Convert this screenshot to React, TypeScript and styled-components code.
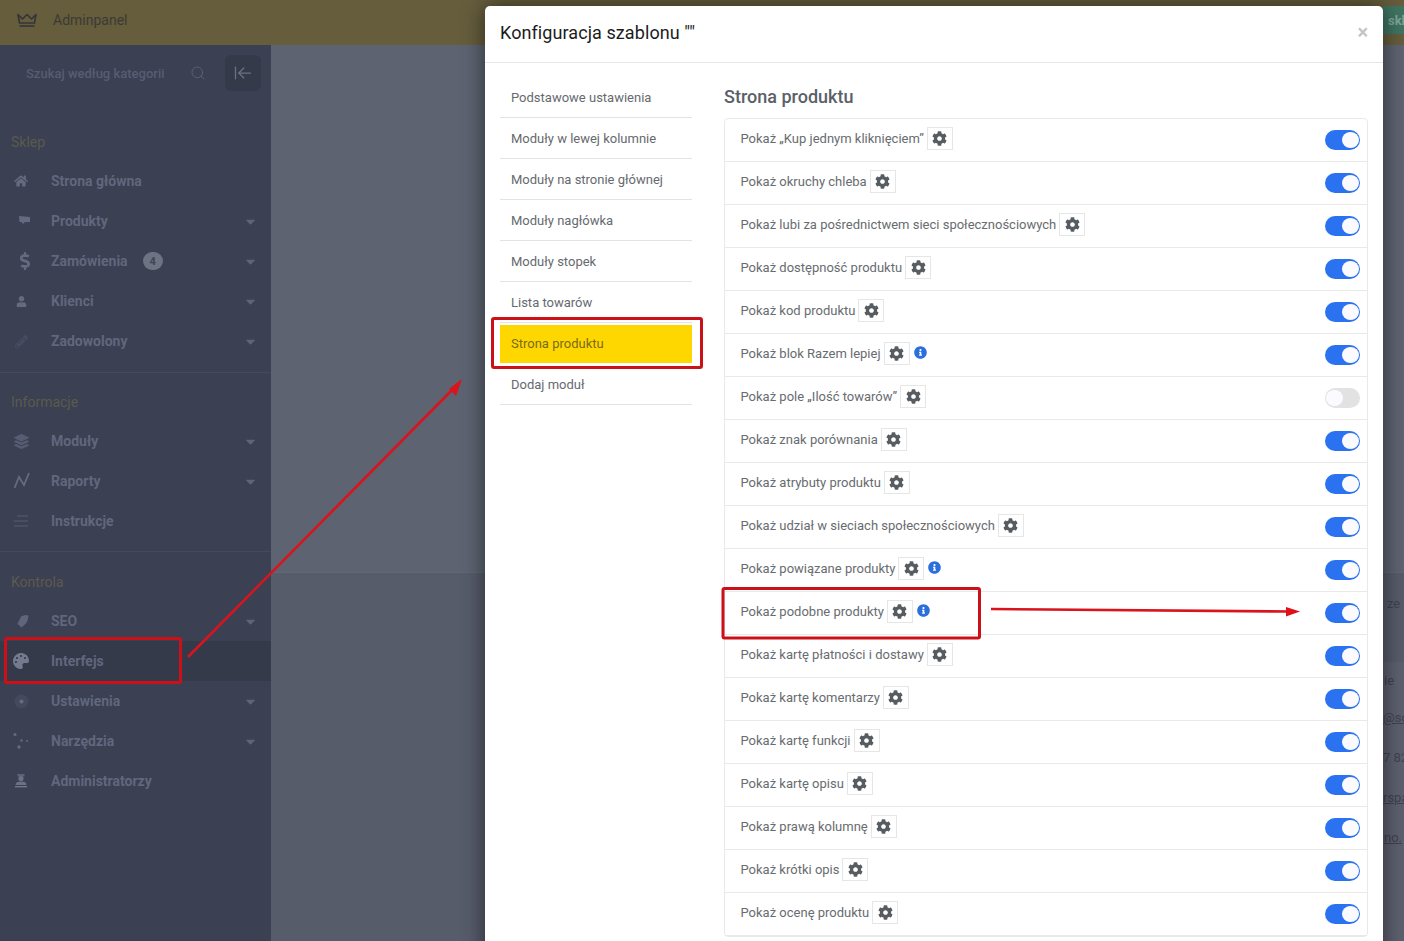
import React from "react";
import styled, { createGlobalStyle } from "styled-components";
import { FaCog, FaInfoCircle, FaHome, FaDollarSign, FaUser, FaLayerGroup, FaPalette, FaCaretDown, FaPencilAlt } from "react-icons/fa";
import { Search, ArrowLeftToLine } from "lucide-react";

const Global = createGlobalStyle`
  html, body { margin: 0; padding: 0; background: #5d6371; }
  * { box-sizing: border-box; }
  body { font-family: Roboto, "Liberation Sans", sans-serif; }
`;

const Page = styled.div`
  position: relative;
  width: 1404px;
  height: 941px;
  overflow: hidden;
  display: flex;
  flex-direction: column;
`;

const TopBar = styled.header`
  height: 45px;
  flex: none;
  background: #655d3c;
  display: flex;
  align-items: center;
  padding: 0 0 5px 17px;
  gap: 16px;
  color: #3c3a36;
  font-size: 14px;
`;

const Body = styled.div`
  flex: 1;
  display: flex;
  min-height: 0;
`;

const Sidebar = styled.aside`
  width: 271px;
  flex: none;
  background: #3b4053;
  display: flex;
  flex-direction: column;
`;

const SearchRow = styled.div`
  display: flex;
  align-items: center;
  padding: 10px 10px 0 12px;
  height: 46px;
`;

const SearchBox = styled.div`
  width: 201px;
  height: 36px;
  margin-right: 12px;
  padding: 0 7px 0 14px;
  display: flex;
  align-items: center;
  justify-content: space-between;
  color: #575d72;
  font-size: 13px;
  font-weight: 500;
`;

const Collapse = styled.div`
  width: 36px;
  height: 36px;
  border-radius: 6px;
  background: #353a4b;
  color: #6b7186;
  display: flex;
  align-items: center;
  justify-content: center;
`;

const Section = styled.section<{ $pt: number; $pb: number; $divider?: boolean }>`
  padding: ${(p) => p.$pt}px 0 ${(p) => p.$pb}px;
  border-bottom: ${(p) => (p.$divider ? "1px solid #444a5d" : "none")};
`;

const SectionTitle = styled.div`
  height: 39px;
  padding-left: 11px;
  display: flex;
  align-items: center;
  color: #5c5a4c;
  font-size: 14px;
`;

const Item = styled.div<{ $active?: boolean }>`
  height: 40px;
  display: flex;
  align-items: center;
  padding: 0 13px 0 14px;
  background: ${(p) => (p.$active ? "#353a4b" : "transparent")};
  color: #61677c;
  font-size: 14px;
  font-weight: 700;
`;

const ItemIcon = styled.span`
  width: 37px;
  flex: none;
  display: flex;
  align-items: center;
  color: #646a7f;
`;

const Shifted = styled.span<{ $x: number; $tone?: string }>`
  display: flex;
  margin-left: ${(p) => p.$x}px;
  color: ${(p) => p.$tone ?? "inherit"};
`;

const Badge = styled.span`
  width: 20px;
  height: 18px;
  border-radius: 9px;
  margin-left: 15px;
  background: #6e7384;
  color: #3f4456;
  font-size: 11px;
  display: flex;
  align-items: center;
  justify-content: center;
`;

const Caret = styled.span`
  margin-left: auto;
  color: #5d6378;
  display: flex;
  font-size: 15px;
`;

const Main = styled.main`
  flex: 1;
  display: flex;
  flex-direction: column;
  background: #5d6371;
`;

const MainTop = styled.div`
  height: 527px;
  flex: none;
`;

const MainBand = styled.div`
  flex: 1;
  background: #575c6b;
  border-top: 1px solid #626775;
`;

const StripPanel = styled.div`
  position: absolute;
  left: 1383px;
  top: 662px;
  width: 21px;
  bottom: 0;
  background: #5d616f;
`;

const StripLine = styled.div<{ $top: number; $left: number; $underline?: boolean }>`
  position: absolute;
  left: ${(p) => p.$left}px;
  right: 0;
  top: ${(p) => p.$top}px;
  white-space: nowrap;
  overflow: hidden;
  color: #3f4350;
  font-size: 13px;
  text-decoration: ${(p) => (p.$underline ? "underline" : "none")};
`;

const GreenTag = styled.div`
  position: absolute;
  left: 1383px;
  top: 6px;
  width: 21px;
  height: 28px;
  background: #3f7461;
  color: #7fa59a;
  font-size: 13px;
  font-weight: 700;
  display: flex;
  align-items: center;
  padding-left: 5px;
  overflow: hidden;
`;

const Modal = styled.div`
  position: absolute;
  left: 485px;
  top: 6px;
  width: 898px;
  height: 960px;
  background: #fff;
  border-radius: 5px;
  box-shadow: 0 0 22px rgba(0, 0, 0, 0.55);
`;

const ModalHead = styled.div`
  height: 57px;
  border-bottom: 1px solid #e6e6e6;
  padding: 0 15px;
  display: flex;
  align-items: center;
  justify-content: space-between;
  color: #1c1c1c;
  font-size: 18px;
`;

const Title = styled.span`
  margin-top: -4px;
  letter-spacing: 0.08px;
`;

const Close = styled.span`
  color: #c4c4c4;
  font-size: 20px;
  font-weight: 700;
  margin-top: -4px;
`;

const ModalBody = styled.div`
  display: flex;
  padding: 14px 15px 0;
`;

const Nav = styled.nav`
  width: 192px;
  flex: none;
  margin-right: 32px;
`;

const NavItem = styled.div<{ $active?: boolean }>`
  height: 41px;
  padding: 0 11px ${(p) => (p.$active ? "1px" : "0")};
  display: flex;
  align-items: center;
  font-size: 13px;
  color: ${(p) => (p.$active ? "#7a6a1a" : "#666a6e")};
  border-top: ${(p) => (p.$active ? "2px solid #fff" : "0")};
  border-bottom: 1px solid ${(p) => (p.$active ? "#fff" : "#e3e3e3")};
  background: ${(p) => (p.$active ? "#ffd700" : "transparent")};
  background-clip: padding-box;
`;

const Content = styled.div`
  flex: 1;
  min-width: 0;
`;

const Heading = styled.h2`
  margin: 0;
  height: 41px;
  display: flex;
  align-items: center;
  padding: 0 0 2px 0;
  font-size: 18px;
  font-weight: 500;
  color: #5a6068;
`;

const List = styled.div`
  border: 1px solid #e9e9e9;
  border-radius: 4px;
`;

const Row = styled.div`
  height: 43px;
  padding: 0 7px 0 15.5px;
  display: flex;
  align-items: center;
  border-bottom: 1px solid #e9e9e9;
  color: #686c70;
  font-size: 13px;
`;

const RowLabel = styled.span`
  margin-top: -4px;
`;

const GearButton = styled.span`
  width: 26px;
  height: 23px;
  margin-left: 3px;
  margin-top: -3px;
  border: 1px solid #e6e6e6;
  display: flex;
  align-items: center;
  justify-content: center;
  color: #565c60;
  font-size: 15px;
`;

const Info = styled.span`
  margin-left: 4px;
  margin-top: -6px;
  color: #2a6fdc;
  display: flex;
  font-size: 13px;
`;

const Toggle = styled.span<{ $on: boolean }>`
  margin-left: auto;
  width: 35px;
  height: 20px;
  border-radius: 10px;
  padding: 2px 1px;
  margin-top: -1px;
  display: flex;
  justify-content: ${(p) => (p.$on ? "flex-end" : "flex-start")};
  background: ${(p) => (p.$on ? "#2a72f0" : "#e2e2e2")};
`;

const Knob = styled.span`
  width: 17px;
  height: 16px;
  border-radius: 50%;
  background: #fbfbff;
`;

const Overlay = styled.svg`
  position: absolute;
  left: 0;
  top: 0;
  pointer-events: none;
`;

const Crown = () => (
  <svg width="20" height="14" viewBox="0 0 20 14" fill="none" stroke="#33343a" strokeWidth="1.6" strokeLinejoin="round">
    <path d="M1 1.5 5.5 6 10 1.5 14.5 6 19 1.5 17.5 10H2.5Z" />
    <path d="M2.5 13H17.5" />
  </svg>
);

const Flag = () => (
  <svg width="15" height="10" viewBox="0 0 15 10" fill="#646a7f"><path d="M3 0 14 1V6H9L7 8 5.5 6H3.5z" /></svg>
);
const Chart = () => (
  <svg width="18" height="18" viewBox="0 0 18 18" fill="none" stroke="#656b80" strokeWidth="1.8"><path d="M1.5 16 6 5l5 8 5-12" /></svg>
);
const Lines = () => (
  <svg width="15" height="12" viewBox="0 0 15 12" stroke="#585e73" strokeWidth="1.1"><path d="M3 1h11M0 6h14M0 11h14" /></svg>
);
const Wheel = () => (
  <svg width="15" height="15" viewBox="0 0 15 15"><circle cx="7.5" cy="7.5" r="7" fill="#444a5e" /><circle cx="7.5" cy="7.5" r="2" fill="#656b80" /></svg>
);
const Dots = () => (
  <svg width="16" height="16" viewBox="0 0 16 16" fill="#656b80"><circle cx="2" cy="1.5" r="1.5" /><circle cx="8.5" cy="7.5" r="1.2" /><circle cx="14" cy="8" r="1" /><circle cx="6" cy="14" r="1.7" /></svg>
);
const Leaf = () => (
  <svg width="14" height="14" viewBox="0 0 14 14" fill="#5f657a"><path d="M5 2.5 9 1l3.5.5L12 5l-1.5 4-5 4.5L1.5 10Z" /></svg>
);
const Admin = () => (
  <svg width="14" height="14" viewBox="0 0 14 14"><path d="M3.5 0h7v2.5h-7z" fill="#5c6277" /><circle cx="7" cy="4.5" r="2.6" fill="#6b7186" /><path d="M1.5 11c0-2.5 2-3.5 5.5-3.5s5.5 1 5.5 3.5z" fill="#6b7186" /><path d="M1 12.7h12" stroke="#777d91" strokeWidth="1.3" /></svg>
);

type Entry = { label: string; icon: React.ReactNode; caret?: boolean; badge?: string; active?: boolean };
type Group = { title: string; pt: number; pb: number; divider: boolean; items: Entry[] };

const groups: Group[] = [
  {
    title: "Sklep",
    pt: 31,
    pb: 11,
    divider: true,
    items: [
      { label: "Strona główna", icon: <FaHome size={14} /> },
      { label: "Produkty", icon: <Shifted $x={2}><Flag /></Shifted>, caret: true },
      { label: "Zamówienia", icon: <Shifted $x={2}><FaDollarSign size={18} /></Shifted>, caret: true, badge: "4" },
      { label: "Klienci", icon: <Shifted $x={2}><FaUser size={11} /></Shifted>, caret: true },
      { label: "Zadowolony", icon: <Shifted $x={1} $tone="#474c60"><FaPencilAlt size={13} /></Shifted>, caret: true },
    ],
  },
  {
    title: "Informacje",
    pt: 9,
    pb: 10,
    divider: true,
    items: [
      { label: "Moduły", icon: <Shifted $x={0} $tone="#565c71"><FaLayerGroup size={15} /></Shifted>, caret: true },
      { label: "Raporty", icon: <Shifted $x={-1}><Chart /></Shifted>, caret: true },
      { label: "Instrukcje", icon: <Lines /> },
    ],
  },
  {
    title: "Kontrola",
    pt: 10,
    pb: 0,
    divider: false,
    items: [
      { label: "SEO", icon: <Shifted $x={2}><Leaf /></Shifted>, caret: true },
      { label: "Interfejs", icon: <Shifted $x={-1} $tone="#757b8f"><FaPalette size={16} /></Shifted>, active: true },
      { label: "Ustawienia", icon: <Wheel />, caret: true },
      { label: "Narzędzia", icon: <Shifted $x={-1}><Dots /></Shifted>, caret: true },
      { label: "Administratorzy", icon: <Admin /> },
    ],
  },
];

const navItems = [
  "Podstawowe ustawienia",
  "Moduły w lewej kolumnie",
  "Moduły na stronie głównej",
  "Moduły nagłówka",
  "Moduły stopek",
  "Lista towarów",
  "Strona produktu",
  "Dodaj moduł",
];

type Setting = { label: string; info?: boolean; off?: boolean };
const settings: Setting[] = [
  { label: "Pokaż „Kup jednym kliknięciem”" },
  { label: "Pokaż okruchy chleba" },
  { label: "Pokaż lubi za pośrednictwem sieci społecznościowych" },
  { label: "Pokaż dostępność produktu" },
  { label: "Pokaż kod produktu" },
  { label: "Pokaż blok Razem lepiej", info: true },
  { label: "Pokaż pole „Ilość towarów”", off: true },
  { label: "Pokaż znak porównania" },
  { label: "Pokaż atrybuty produktu" },
  { label: "Pokaż udział w sieciach społecznościowych" },
  { label: "Pokaż powiązane produkty", info: true },
  { label: "Pokaż podobne produkty", info: true },
  { label: "Pokaż kartę płatności i dostawy" },
  { label: "Pokaż kartę komentarzy" },
  { label: "Pokaż kartę funkcji" },
  { label: "Pokaż kartę opisu" },
  { label: "Pokaż prawą kolumnę" },
  { label: "Pokaż krótki opis" },
  { label: "Pokaż ocenę produktu" },
];

const strip: { text: string; top: number; left: number; underline?: boolean }[] = [
  { text: "ze", top: 596, left: 1387 },
  { text: "ie", top: 673, left: 1384 },
  { text: "@so", top: 710, left: 1383, underline: true },
  { text: "7 82", top: 750, left: 1383 },
  { text: "rspa", top: 790, left: 1383, underline: true },
  { text: "no.", top: 830, left: 1384, underline: true },
];

export default function App() {
  return (
    <Page>
      <Global />
      <TopBar>
        <Crown />
        <span>Adminpanel</span>
      </TopBar>
      <Body>
        <Sidebar>
          <SearchRow>
            <SearchBox>
              <span>Szukaj według kategorii</span>
              <Search size={16} strokeWidth={1.3} color="#5f657a" />
            </SearchBox>
            <Collapse>
              <ArrowLeftToLine size={20} strokeWidth={1.5} />
            </Collapse>
          </SearchRow>
          {groups.map((g) => (
            <Section key={g.title} $pt={g.pt} $pb={g.pb} $divider={g.divider}>
              <SectionTitle>{g.title}</SectionTitle>
              {g.items.map((it) => (
                <Item key={it.label} $active={it.active}>
                  <ItemIcon>{it.icon}</ItemIcon>
                  {it.label}
                  {it.badge && <Badge>{it.badge}</Badge>}
                  {it.caret && (
                    <Caret>
                      <FaCaretDown />
                    </Caret>
                  )}
                </Item>
              ))}
            </Section>
          ))}
        </Sidebar>
        <Main>
          <MainTop />
          <MainBand />
        </Main>
      </Body>
      <StripPanel />
      <GreenTag>skl</GreenTag>
      {strip.map((s) => (
        <StripLine key={s.text} $top={s.top} $left={s.left} $underline={s.underline}>
          {s.text}
        </StripLine>
      ))}
      <Modal>
        <ModalHead>
          <Title>Konfiguracja szablonu ""</Title>
          <Close>×</Close>
        </ModalHead>
        <ModalBody>
          <Nav>
            {navItems.map((n) => (
              <NavItem key={n} $active={n === "Strona produktu"}>
                {n}
              </NavItem>
            ))}
          </Nav>
          <Content>
            <Heading>Strona produktu</Heading>
            <List>
              {settings.map((s) => (
                <Row key={s.label}>
                  <RowLabel>{s.label}</RowLabel>
                  <GearButton>
                    <FaCog />
                  </GearButton>
                  {s.info && (
                    <Info>
                      <FaInfoCircle />
                    </Info>
                  )}
                  <Toggle $on={!s.off}>
                    <Knob />
                  </Toggle>
                </Row>
              ))}
            </List>
          </Content>
        </ModalBody>
      </Modal>
      <Overlay width="1404" height="941" viewBox="0 0 1404 941" fill="none">
        <rect x="492.5" y="318.5" width="209" height="49" rx="1.5" stroke="#cc1018" strokeWidth="3" />
        <rect x="723" y="588.5" width="256.5" height="49.5" rx="1.5" stroke="#cc1018" strokeWidth="3" />
        <rect x="5.5" y="638.5" width="175" height="44" rx="1.5" stroke="#cc1018" strokeWidth="3" />
        <path d="M188 657 455 387" stroke="#d9141c" strokeWidth="2.6" />
        <path d="M462 379 449 389 456 396Z" fill="#d9141c" />
        <path d="M991 609 1288 611.5" stroke="#d9141c" strokeWidth="2.6" />
        <path d="M1300 611.5 1286 607 1286 616.5Z" fill="#e01018" />
      </Overlay>
    </Page>
  );
}
